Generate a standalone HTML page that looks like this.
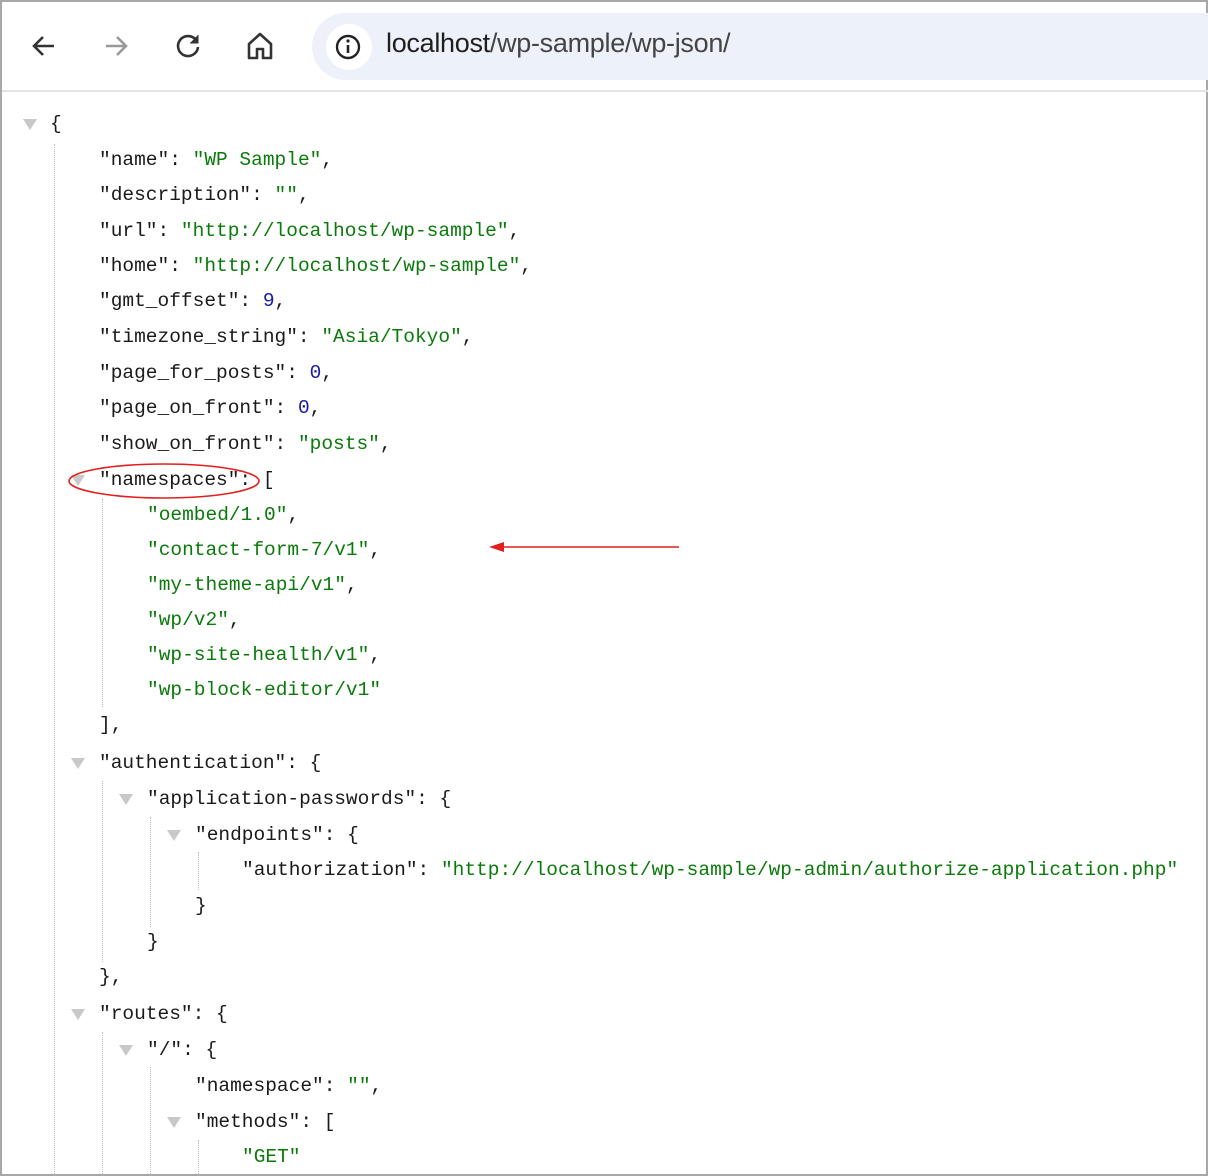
<!DOCTYPE html>
<html><head><meta charset="utf-8"><style>
*{margin:0;padding:0;box-sizing:border-box}
html,body{width:1208px;height:1176px;overflow:hidden;background:#fff}
body{position:relative;border:2px solid #a8a8a8;border-bottom:2px solid #a8a8a8}
.tb{position:absolute;left:0;top:0;width:1208px;height:90px;border-bottom:2px solid #e3e3e3}
.url{position:absolute;left:310px;top:11px;width:900px;height:67px;background:#edf1f9;border-radius:34px 0 0 34px}
.ic{position:absolute;left:324px;top:22px;width:46px;height:46px;border-radius:50%;background:#fff}
.ut{position:absolute;left:384px;top:26px;font:27px "Liberation Sans",sans-serif;color:#1f1f1f;letter-spacing:-0.3px}
.ut span{color:#444}
.l{position:absolute;font:19.5px/36px "Liberation Mono",monospace;color:#1a1a1a;white-space:pre;height:36px}
.s{color:#0a7a0a}.n{color:#1a1aa6}
.t{position:absolute;width:0;height:0;border-left:7px solid transparent;border-right:7px solid transparent;border-top:11px solid #c8c8c8}
.g{position:absolute;width:0;border-left:1px dotted #bdbdbd}
</style></head><body>
<div class="tb">
<svg style="position:absolute;left:28px;top:30px" width="28" height="28" viewBox="0 0 28 28"><path d="M24 14H5M13 5l-9 9 9 9" fill="none" stroke="#333" stroke-width="2.6"/></svg>
<svg style="position:absolute;left:100px;top:30px" width="28" height="28" viewBox="0 0 28 28"><path d="M4 14h19M15 5l9 9-9 9" fill="none" stroke="#999" stroke-width="2.6"/></svg>
<svg style="position:absolute;left:172px;top:30px" width="28" height="28" viewBox="0 0 28 28"><path d="M22 8A10 10 0 1 0 24 15" fill="none" stroke="#333" stroke-width="2.6"/><path d="M24 3v8h-8" fill="#333" stroke="#333" stroke-width="1"/></svg>
<svg style="position:absolute;left:244px;top:29px" width="28" height="30" viewBox="0 0 28 30"><path d="M3 13L14 3l11 10v14H17V18h-6v9H3z" fill="none" stroke="#333" stroke-width="2.6" stroke-linejoin="round"/></svg>
<div class="url"></div><div class="ic"></div>
<svg style="position:absolute;left:332px;top:31px" width="28" height="28" viewBox="0 0 28 28"><circle cx="14" cy="14" r="11" fill="none" stroke="#222" stroke-width="2.4"/><path d="M14 12v8" stroke="#222" stroke-width="2.6"/><circle cx="14" cy="8" r="1.6" fill="#222"/></svg>
<div class="ut">localhost<span>/wp-sample/wp-json/</span></div>
</div>

<div class="g" style="left:52px;top:142px;height:1040px"></div>
<div class="g" style="left:100px;top:497px;height:208px"></div>
<div class="g" style="left:100px;top:779px;height:181px"></div>
<div class="g" style="left:100px;top:1030px;height:150px"></div>
<div class="g" style="left:148px;top:815px;height:110px"></div>
<div class="g" style="left:148px;top:1065px;height:115px"></div>
<div class="g" style="left:196px;top:850px;height:38px"></div>
<div class="g" style="left:196px;top:1138px;height:42px"></div>

<div class="t" style="left:21px;top:117px"></div>
<div class="t" style="left:69px;top:473px"></div>
<div class="t" style="left:69px;top:756px"></div>
<div class="t" style="left:117px;top:792px"></div>
<div class="t" style="left:165px;top:828px"></div>
<div class="t" style="left:69px;top:1007px"></div>
<div class="t" style="left:117px;top:1043px"></div>
<div class="t" style="left:165px;top:1115px"></div>

<div class="l" style="left:48px;top:104px">{</div>
<div class="l" style="left:97px;top:140px">"name": <span class="s">"WP Sample"</span>,</div>
<div class="l" style="left:97px;top:175px">"description": <span class="s">""</span>,</div>
<div class="l" style="left:97px;top:211px">"url": <span class="s">"http://localhost/wp-sample"</span>,</div>
<div class="l" style="left:97px;top:246px">"home": <span class="s">"http://localhost/wp-sample"</span>,</div>
<div class="l" style="left:97px;top:281px">"gmt_offset": <span class="n">9</span>,</div>
<div class="l" style="left:97px;top:317px">"timezone_string": <span class="s">"Asia/Tokyo"</span>,</div>
<div class="l" style="left:97px;top:353px">"page_for_posts": <span class="n">0</span>,</div>
<div class="l" style="left:97px;top:388px">"page_on_front": <span class="n">0</span>,</div>
<div class="l" style="left:97px;top:424px">"show_on_front": <span class="s">"posts"</span>,</div>
<div class="l" style="left:97px;top:460px">"namespaces": [</div>
<div class="l" style="left:145px;top:495px"><span class="s">"oembed/1.0"</span>,</div>
<div class="l" style="left:145px;top:530px"><span class="s">"contact-form-7/v1"</span>,</div>
<div class="l" style="left:145px;top:565px"><span class="s">"my-theme-api/v1"</span>,</div>
<div class="l" style="left:145px;top:600px"><span class="s">"wp/v2"</span>,</div>
<div class="l" style="left:145px;top:635px"><span class="s">"wp-site-health/v1"</span>,</div>
<div class="l" style="left:145px;top:670px"><span class="s">"wp-block-editor/v1"</span></div>
<div class="l" style="left:97px;top:705px">],</div>
<div class="l" style="left:97px;top:743px">"authentication": {</div>
<div class="l" style="left:145px;top:779px">"application-passwords": {</div>
<div class="l" style="left:193px;top:815px">"endpoints": {</div>
<div class="l" style="left:240px;top:850px">"authorization": <span class="s">"http://localhost/wp-sample/wp-admin/authorize-application.php"</span></div>
<div class="l" style="left:193px;top:886px">}</div>
<div class="l" style="left:145px;top:922px">}</div>
<div class="l" style="left:97px;top:957px">},</div>
<div class="l" style="left:97px;top:994px">"routes": {</div>
<div class="l" style="left:145px;top:1030px">"/": {</div>
<div class="l" style="left:193px;top:1066px">"namespace": <span class="s">""</span>,</div>
<div class="l" style="left:193px;top:1102px">"methods": [</div>
<div class="l" style="left:240px;top:1137px"><span class="s">"GET"</span></div>

<svg style="position:absolute;left:0;top:0" width="1208" height="1176">
<ellipse cx="162" cy="479" rx="95" ry="17" fill="none" stroke="#e31e1e" stroke-width="1.6"/>
<path d="M677 545H500" stroke="#e31e1e" stroke-width="1.6"/>
<path d="M487 545l15-5v10z" fill="#e31e1e"/>
</svg>
</body></html>
